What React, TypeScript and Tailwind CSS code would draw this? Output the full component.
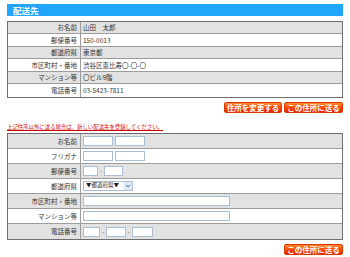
const font = { fontFamily: '"Noto Sans CJK JP", "Liberation Sans", sans-serif' };

const current = [
  ['お名前', '山田\u3000太郎'],
  ['郵便番号', '150-0013'],
  ['都道府県', '東京都'],
  ['市区町村・番地', '渋谷区恵比寿〇-〇-〇'],
  ['マンション等', '〇ビル9階'],
  ['電話番号', '03-5423-7811'],
];

function OrangeButton({ label, width }: { label: string; width: string }) {
  return (
    <button
      className={`${width} h-[11px] rounded-[2px] border border-[#d83a00] bg-gradient-to-b from-[#ff8a2a] via-[#ff4a0a] to-[#e82000] text-white text-[7.5px] font-bold leading-none flex items-center justify-center`}
    >
      {label}
    </button>
  );
}

function Input({ w }: { w: string }) {
  return <div className={`${w} h-[10px] bg-white border border-[#a9bdd3]`} />;
}

function Dash() {
  return <span className="text-[6px] text-[#555] px-[2px] leading-none">-</span>;
}

function Row({
  label,
  gray,
  last,
  h,
  children,
}: {
  label: string;
  gray: boolean;
  last?: boolean;
  h: string;
  children: React.ReactNode;
}) {
  return (
    <div className={`${h} flex ${gray ? 'bg-[#e2e2e2]' : 'bg-white'} ${last ? '' : 'border-b border-[#9c9c9c]'}`}>
      <div className="w-[73px] shrink-0 border-r border-[#9c9c9c] flex items-center justify-end pr-[3px] text-[6.5px] text-[#333] leading-none">
        {label}
      </div>
      <div className="flex-1 flex items-center pl-[2px] text-[6.5px] text-[#333] leading-none">{children}</div>
    </div>
  );
}

export default function App() {
  return (
    <div className="w-[350px] h-[257px] bg-white px-[7px] pt-[4px] overflow-hidden" style={font}>
      <div className="h-[12px] bg-[#22a6fb] flex items-center pl-[6px]">
        <span className="text-white text-[8.5px] font-bold leading-none">配送先</span>
      </div>

      <div className="mt-[5px] border border-[#6e6e6e]">
        {current.map(([k, v], i) => (
          <Row key={k} label={k} gray={i % 2 === 0} last={i === current.length - 1} h={i % 2 === 0 ? 'h-[12px]' : 'h-[13px]'}>
            {v}
          </Row>
        ))}
      </div>

      <div className="mt-[4px] flex justify-end gap-[2px]">
        <OrangeButton label="住所を変更する" width="w-[58px]" />
        <OrangeButton label="この住所に送る" width="w-[59px]" />
      </div>

      <div className="mt-[11px] text-[5.4px] leading-[7px] text-[#d00000] underline">
        上記住所以外に送る場合は、新しい配送先を登録してください。
      </div>

      <div className="mt-[2px] border border-[#6e6e6e]">
        <Row label="お名前" gray h="h-[15px]">
          <div className="flex gap-[2px]"><Input w="w-[30px]" /><Input w="w-[30px]" /></div>
        </Row>
        <Row label="フリガナ" gray={false} h="h-[15px]">
          <div className="flex gap-[2px]"><Input w="w-[30px]" /><Input w="w-[30px]" /></div>
        </Row>
        <Row label="郵便番号" gray h="h-[15px]">
          <div className="flex items-center"><Input w="w-[15px]" /><Dash /><Input w="w-[19px]" /></div>
        </Row>
        <Row label="都道府県" gray={false} h="h-[15px]">
          <div className="w-[50px] h-[10px] bg-white border border-[#a9bdd3] flex items-center justify-between pl-[2px]">
            <span className="text-[5.5px] text-[#222]">▼都道府県▼</span>
            <span className="w-[8px] h-[8px] bg-[#dfe8f6] flex items-center justify-center">
              <svg width="6" height="4" viewBox="0 0 6 4">
                <path d="M0.8 0.8 L3 3 L5.2 0.8" stroke="#4d6fa8" strokeWidth="1" fill="none" />
              </svg>
            </span>
          </div>
        </Row>
        <Row label="市区町村・番地" gray h="h-[15px]">
          <Input w="w-[147px]" />
        </Row>
        <Row label="マンション等" gray={false} h="h-[15px]">
          <Input w="w-[147px]" />
        </Row>
        <Row label="電話番号" gray last h="h-[15px]">
          <div className="flex items-center"><Input w="w-[17px]" /><Dash /><Input w="w-[20px]" /><Dash /><Input w="w-[21px]" /></div>
        </Row>
      </div>

      <div className="mt-[4px] flex justify-end">
        <OrangeButton label="この住所に送る" width="w-[59px]" />
      </div>
    </div>
  );
}
